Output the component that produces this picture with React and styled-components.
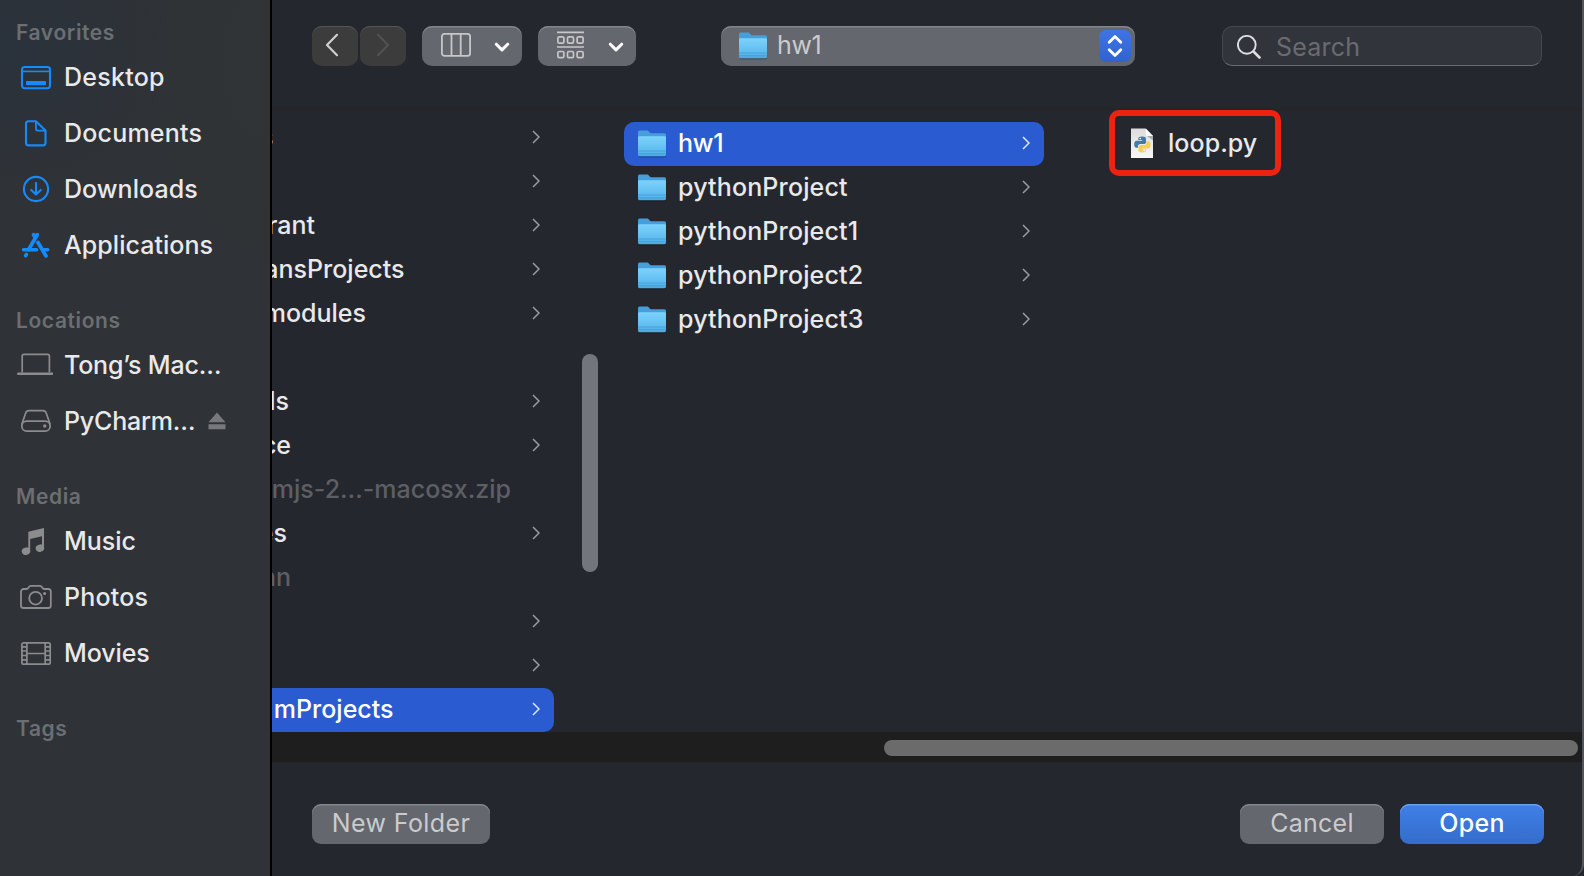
import React from "react";
import styled, { createGlobalStyle } from "styled-components";

const Global = createGlobalStyle`
  * { box-sizing: border-box; }
  html, body { margin: 0; padding: 0; background: #25272f; }
  body {
    font-family: Inter, "Liberation Sans", sans-serif;
    font-size: 25px;
    color: #e9e9ea;
    overflow: hidden;
  }
`;

const Dialog = styled.div`
  display: flex;
  width: 1584px;
  height: 876px;
  overflow: hidden;
  background: #25272f;
`;

/* ---------- sidebar ---------- */
const Sidebar = styled.aside`
  flex: none;
  display: flex;
  flex-direction: column;
  gap: 30px;
  width: 272px;
  padding: 15px 0 0 17px;
  border-right: 2px solid #000;
  background:
    radial-gradient(ellipse 180px 150px at 0 50px, rgba(41, 50, 60, 0.9), rgba(41, 50, 60, 0)),
    radial-gradient(ellipse 160px 260px at 100% 60px, rgba(48, 52, 53, 0.9), rgba(48, 52, 53, 0)),
    #2f3236;
`;

const Section = styled.section`
  display: flex;
  flex-direction: column;
`;

const Heading = styled.h2`
  margin: 0 0 0 -1px;
  height: 34px;
  padding-top: 1px;
  line-height: 34px;
  font-size: 21px;
  font-weight: 600;
  letter-spacing: 0.6px;
  color: #6b6e73;
`;

const Place = styled.div`
  display: flex;
  align-items: center;
  height: 56px;
  color: ${(p) => (p.$blue ? "#1689fb" : "#8b8c8e")};
`;

const PlaceIcon = styled.svg`
  flex: none;
  width: 36px;
  height: 28px;
  fill: none;
  stroke: currentColor;
  stroke-width: 2.1;
`;

const PlaceName = styled.span`
  margin-left: 11px;
  letter-spacing: ${(p) => p.$track || 0}px;
  color: #e9e9ea;
  font-weight: 450;
  white-space: nowrap;
`;

const Eject = styled.svg`
  width: 18px;
  height: 18px;
  margin-left: ${(p) => p.$gap}px;
  fill: #76787c;
`;

/* ---------- main ---------- */
const Main = styled.main`
  flex: 1;
  min-width: 0;
  display: flex;
  flex-direction: column;
  border-right: 2px solid #53555b;
  border-bottom-right-radius: 12px;
`;

const Toolbar = styled.header`
  display: flex;
  align-items: flex-start;
  height: 110px;
  padding: 26px 0 0 40px;
  border-bottom: 2px solid #262424;
`;

const NavButton = styled.button`
  display: flex;
  align-items: center;
  justify-content: center;
  width: 46px;
  height: 40px;
  margin: 0 2px 0 0;
  padding: 0 6px 2px 0;
  border: 0;
  border-radius: 10px;
  background: #3c3c3c;
  box-shadow: inset 0 1px 0 #555;
  color: ${(p) => (p.$dim ? "#515151" : "#cfcfcf")};
  svg { width: 14px; height: 24px; margin-left: ${(p) => (p.$dim ? 6 : 0)}px; }
`;

const ViewButton = styled.button`
  display: flex;
  align-items: center;
  width: ${(p) => p.$w}px;
  height: 40px;
  margin: 0 0 0 ${(p) => p.$gap}px;
  padding: 0 0 2px 19px;
  border: 0;
  border-radius: 10px;
  background: #64676e;
  box-shadow: inset 0 1.5px 0 #83858b;
  svg { flex: none; }
`;

const Caret = styled.svg`
  width: 16px;
  height: 12px;
  margin: 3px 0 0 ${(p) => p.$gap}px;
`;

const PathPopup = styled.div`
  display: flex;
  align-items: center;
  width: 414px;
  height: 40px;
  margin-left: 85px;
  padding: 0 4px 0 18px;
  border-radius: 10px;
  background: #64676e;
  box-shadow: inset 0 1.5px 0 #83858b;
`;

const PathName = styled.span`
  flex: 1;
  margin-left: 9px;
  padding-bottom: 3px;
  color: #cbcbcc;
  letter-spacing: -0.4px;
`;

const Stepper = styled.span`
  display: flex;
  width: 32px;
  height: 32px;
  border-radius: 7px;
  background: linear-gradient(#3f74e6, #3063d0);
`;

const SearchField = styled.div`
  display: flex;
  align-items: center;
  width: 320px;
  height: 40px;
  margin-left: 87px;
  padding: 2px 0 0 14px;
  border: 1px solid #45474f;
  border-bottom-color: #6a6c73;
  border-radius: 10px;
  background: #32343c;
  color: #696b71;
  letter-spacing: 0.2px;
  svg { width: 24px; height: 24px; margin-right: 15px; }
`;

const Browser = styled.div`
  display: flex;
  height: 622px;
`;

const Column = styled.div`
  flex: none;
  width: ${(p) => p.$w}px;
  padding: ${(p) => p.$pad};
  overflow: hidden;
`;

const ScrollGutter = styled.div`
  flex: none;
  width: 70px;
  padding: 244px 0 0 28px;
`;

const ScrollThumb = styled.div`
  width: ${(p) => p.$w}px;
  height: ${(p) => p.$h}px;
  border-radius: 8px;
  background: ${(p) => p.$color};
`;

const Row = styled.div`
  display: flex;
  align-items: center;
  justify-content: space-between;
  height: 44px;
  padding: 0 14px 3px ${(p) => (p.$clipped ? 0 : 14)}px;
  border-radius: ${(p) => (p.$clipped ? "0 10px 10px 0" : "10px")};
  background: ${(p) => (p.$selected ? "#2a5bd0" : "transparent")};
  color: ${(p) => (p.$selected ? "#fff" : p.$dim ? "#5d5f64" : "#e9e9ea")};
`;

const Clip = styled.span`
  display: flex;
  justify-content: flex-end;
  width: ${(p) => p.$w}px;
  overflow: hidden;
  font-weight: 450;
  white-space: nowrap;
`;

const Entry = styled.span`
  display: flex;
  align-items: center;
  > svg { position: relative; top: 1px; }
`;

const EntryName = styled.span`
  margin-left: 11px;
  font-weight: 450;
  letter-spacing: ${(p) => p.$track || 0}px;
`;

const FileName = styled(EntryName)`
  margin-left: 14px;
`;

const Chevron = styled.svg`
  flex: none;
  width: 8px;
  height: 14px;
  fill: none;
  stroke: ${(p) => (p.$light ? "#dfe6f8" : "#9b9ca0")};
  stroke-width: 1.5;
`;

const FileMark = styled.div`
  display: flex;
  align-items: center;
  width: 172px;
  height: 66px;
  padding: 0 0 1px 15px;
  border: 6px solid #ee2211;
  border-radius: 10px;
`;

const ScrollTrack = styled.div`
  display: flex;
  justify-content: flex-end;
  height: 31px;
  padding: 8px 4px 0 0;
  background: #1e1e1e;
  border-bottom: 1px solid #262424;
`;

const Footer = styled.footer`
  display: flex;
  padding: 41px 38px 0 40px;
`;

const Button = styled.button`
  width: ${(p) => p.$w}px;
  height: 40px;
  margin: 0 0 0 ${(p) => p.$gap || 0};
  padding: 0 0 2px;
  border: 0;
  border-radius: 9px;
  background: ${(p) => (p.$primary ? "linear-gradient(#407fe8, #346dcb)" : "#64676e")};
  box-shadow: inset 0 1.5px 0 ${(p) => (p.$primary ? "#6b9cef" : "#83858b")};
  color: ${(p) => (p.$primary ? "#fff" : "#cbcbcc")};
  font: ${(p) => (p.$primary ? 500 : 400)} 25px Inter, sans-serif;
  letter-spacing: ${(p) => p.$track || 0}px;
`;

/* ---------- drawings ---------- */
const icons = {
  desktop: (
    <>
      <rect x="5" y="4" width="28" height="21.2" rx="2.6" />
      <path d="M5 8.4h28" strokeWidth="1.6" />
      <rect x="9" y="18" width="20" height="4.2" rx="1" fill="currentColor" stroke="none" />
    </>
  ),
  documents: (
    <>
      <path d="M11.5 2.2h7.4L28.5 11.6v12.2a2.6 2.6 0 0 1-2.6 2.6H11.6A2.6 2.6 0 0 1 9 23.8V4.8a2.6 2.6 0 0 1 2.5-2.6z" strokeLinejoin="round" />
      <path d="M18.9 2.4v7.4a1.8 1.8 0 0 0 1.8 1.8h7.6" strokeWidth="1.8" />
    </>
  ),
  downloads: (
    <>
      <circle cx="19" cy="14" r="12.1" />
      <path d="M19 8v11.4M14.2 14.9l4.8 4.7 4.8-4.7" strokeLinecap="round" strokeLinejoin="round" />
    </>
  ),
  applications: (
    <g strokeLinecap="round">
      <path d="M20.3 3.7L11.6 18.6M16.6 3.7L18.4 7M21 11.5l8 13.4" strokeWidth="3.8" />
      <path d="M6.5 18.7h13.2M26 18.7h4.800" strokeWidth="3.4" />
      <path d="M9.4 23.500l-.7 1.200" strokeWidth="3.6" />
    </g>
  ),
  laptop: (
    <>
      <path d="M5.2 21.5V5.200a1.800 1.800 0 0 1 1.800-1.800h23.600a1.800 1.800 0 0 1 1.800 1.800v16.300" strokeWidth="1.700" />
      <path d="M1.200 22.700h34.200" strokeWidth="2.400" strokeLinecap="round" />
    </>
  ),
  drive: (
    <>
      <path d="M4.800 17.200L8.700 6a3.600 3.600 0 0 1 3.400-2.300h13.600A3.600 3.600 0 0 1 29.200 6l3.900 11.200" strokeWidth="1.700" />
      <rect x="4.800" y="14.200" width="28.300" height="9.900" rx="4.900" strokeWidth="1.800" />
      <circle cx="27.800" cy="19" r="1.700" fill="currentColor" stroke="none" />
    </>
  ),
  music: (
    <g fill="currentColor" stroke="none">
      <path d="M11.300 4.800L27 1v19.500h-2V9.300L13.200 12v11.500h-1.900z" />
      <ellipse cx="9" cy="24.200" rx="4.300" ry="3.700" transform="rotate(-15 9 24.200)" />
      <ellipse cx="22.900" cy="21.200" rx="4.300" ry="3.700" transform="rotate(-15 22.900 21.200)" />
    </g>
  ),
  photos: (
    <g strokeWidth="1.800">
      <path d="M4 8.600A2.600 2.600 0 0 1 6.600 6h3.200c1.600 0 2-3.200 4-3.200h9.200c2 0 2.400 3.200 4 3.200h4.200a2.600 2.600 0 0 1 2.600 2.600v13.800a2.600 2.600 0 0 1-2.600 2.600H6.600A2.600 2.600 0 0 1 4 22.400z" />
      <circle cx="18.600" cy="15.200" r="6.400" />
      <circle cx="27.600" cy="10.500" r="1.600" fill="currentColor" stroke="none" />
    </g>
  ),
  movies: (
    <g strokeWidth="1.700">
      <rect x="4.900" y="3.800" width="28.300" height="21.400" rx="1.800" />
      <path d="M9.900 4v21M28.200 4v21M9.900 14.500h18.300M5 7.800h4.900M5 12h4.900M5 16.500h4.900M5 20.800h4.900M28.200 7.800h5M28.200 12h5M28.200 16.500h5M28.200 20.800h5" />
    </g>
  ),
};

const FolderIcon = () => (
  <svg width="29" height="28" viewBox="0 0 29 28">
    <defs>
      <linearGradient id="folderFront" x1="0" y1="0" x2="0" y2="1">
        <stop offset="0" stopColor="#7dd2fb" />
        <stop offset="0.7" stopColor="#5fbcef" />
        <stop offset="1" stopColor="#4ba9e2" />
      </linearGradient>
    </defs>
    <rect x="0.800" y="25" width="27" height="2.500" rx="1" fill="#000" opacity="0.250" />
    <path d="M0 2a1.500 1.500 0 0 1 1.500-1.500h7.600c2 0 2.300 2.800 4.400 2.800h13A1.500 1.500 0 0 1 28 4.800V12H0z" fill="#469fda" />
    <path d="M0 7.400a1.200 1.200 0 0 1 1.200-1.200h25.600A1.200 1.200 0 0 1 28 7.400v17.400a1.400 1.400 0 0 1-1.400 1.400H1.400A1.400 1.400 0 0 1 0 24.800z" fill="url(#folderFront)" />
    <path d="M0 21h28M0 23.700h28" stroke="#459fd6" strokeWidth="0.900" />
  </svg>
);

const PythonFileIcon = () => (
  <svg width="24" height="32" viewBox="0 0 24 32">
    <defs>
      <linearGradient id="paper" x1="0" y1="0" x2="0" y2="1">
        <stop offset="0" stopColor="#dcdcdc" />
        <stop offset="1" stopColor="#f8f8f8" />
      </linearGradient>
    </defs>
    <path d="M1 1.500h14.500L23 9v22H1z" fill="url(#paper)" />
    <path d="M16.500 8.500L23 9v4.500z" fill="#a9a9a9" />
    <path d="M15.800 1.500L23 9h-5.600a1.600 1.600 0 0 1-1.600-1.600z" fill="#fbfbfb" />
    <path d="M8.300 11.800c0-1.500 1.200-2.200 3.800-2.200s3.900.7 3.900 2.300v3c0 1.400-.9 2.200-2.300 2.200h-3.400c-1.600 0-2.300.9-2.300 2.300v1.300H6.400c-1.500 0-2.200-1.300-2.200-3.500s.9-3.500 2.400-3.500h5.600V13H8.300z" fill="#4279ab" />
    <path d="M16.100 23.200c0 1.500-1.300 2.200-3.900 2.200s-3.800-.8-3.800-2.200v-3c0-1.300.9-2.100 2.200-2.100h3.500c1.500 0 2.300-.9 2.300-2.200v-1.700h1.800c1.500 0 2.300 1.300 2.300 3.700s-.9 3.700-2.400 3.700h-5.700v.6h3.700z" fill="#f3d250" />
    <circle cx="10.200" cy="11.600" r=".8" fill="#fff" />
    <circle cx="14.200" cy="23.400" r=".8" fill="#fff" />
  </svg>
);

const DownCaret = ({ gap }) => (
  <Caret $gap={gap} viewBox="0 0 16 12">
    <path d="M2.300 3.200L8 8.900l5.700-5.700" fill="none" stroke="#fff" strokeWidth="3" strokeLinecap="round" strokeLinejoin="round" />
  </Caret>
);

const RowChevron = ({ light }) => (
  <Chevron $light={light} viewBox="0 0 8 14">
    <path d="M1 1l6 6-6 6" />
  </Chevron>
);

/* ---------- data ---------- */
const sections = [
  {
    title: "Favorites",
    blue: true,
    items: [
      { icon: "desktop", name: "Desktop", track: 0.25 },
      { icon: "documents", name: "Documents", track: 0.2 },
      { icon: "downloads", name: "Downloads", track: 0.05 },
      { icon: "applications", name: "Applications", track: 0.05 },
    ],
  },
  {
    title: "Locations",
    items: [
      { icon: "laptop", name: "Tong’s Mac…", track: -0.2 },
      { icon: "drive", name: "PyCharm…", track: -0.2, eject: 13 },
    ],
  },
  {
    title: "Media",
    items: [
      { icon: "music", name: "Music" },
      { icon: "photos", name: "Photos", track: 0.2 },
      { icon: "movies", name: "Movies", track: -0.1 },
    ],
  },
  { title: "Tags", items: [] },
];

/* `w` is how much of each name still shows at the left edge of the column */
const homeRows = [
  { name: "s", w: 1.5, open: true },
  { name: "", w: 0, open: true },
  { name: "rant", w: 43, open: true },
  { name: "ansProjects", w: 132.5, open: true },
  { name: "modules", w: 94, open: true },
  { name: "", w: 0 },
  { name: "ls", w: 17, open: true },
  { name: "ce", w: 19, open: true },
  { name: "mjs-2…-macosx.zip", w: 239, dim: true },
  { name: "es", w: 15, open: true },
  { name: "nn", w: 19, dim: true },
  { name: "", w: 0, open: true },
  { name: "", w: 0, open: true },
  { name: "mProjects", w: 121.5, open: true, selected: true },
];

const projects = ["hw1", "pythonProject", "pythonProject1", "pythonProject2", "pythonProject3"];

export default function App() {
  return (
    <>
      <Global />
      <Dialog>
        <Sidebar>
          {sections.map((s) => (
            <Section key={s.title}>
              <Heading>{s.title}</Heading>
              {s.items.map((it) => (
                <Place key={it.name} $blue={s.blue}>
                  <PlaceIcon viewBox="0 0 36 28">{icons[it.icon]}</PlaceIcon>
                  <PlaceName $track={it.track}>{it.name}</PlaceName>
                  {it.eject && (
                    <Eject $gap={it.eject} viewBox="0 0 18 18">
                      <path d="M9 .500L17.500 10.300H.500zM.500 12.300h17v5H.500z" />
                    </Eject>
                  )}
                </Place>
              ))}
            </Section>
          ))}
        </Sidebar>

        <Main>
          <Toolbar>
            <NavButton>
              <svg viewBox="0 0 14 24"><path d="M12 1.800L2 12l10 10.200" fill="none" stroke="currentColor" strokeWidth="2.200" strokeLinecap="round" strokeLinejoin="round" /></svg>
            </NavButton>
            <NavButton $dim>
              <svg viewBox="0 0 14 24"><path d="M2 1.800L12 12 2 22.200" fill="none" stroke="currentColor" strokeWidth="2.200" strokeLinecap="round" strokeLinejoin="round" /></svg>
            </NavButton>
            <ViewButton $w={100} $gap={14}>
              <svg width="30" height="24" viewBox="0 0 30 24" fill="none" stroke="#c6c7c9" strokeWidth="1.800">
                <rect x="0.900" y="0.900" width="28.200" height="22" rx="2.600" />
                <path d="M10.500 1v22M19.700 1v22" />
              </svg>
              <DownCaret gap={23} />
            </ViewButton>
            <ViewButton $w={98} $gap={16}>
              <svg width="27" height="28" viewBox="0 0 27 28" fill="none" stroke="#c6c7c9" strokeWidth="1.700">
                <path d="M0 1.300h27M0 16h27" />
                {[5.900, 20.500].map((y) => [0.900, 10.500, 20.100].map((x) => (
                  <rect key={`${x}-${y}`} x={x} y={y} width="6" height="6.200" rx="1.400" />
                )))}
              </svg>
              <DownCaret gap={24} />
            </ViewButton>
            <PathPopup>
              <FolderIcon />
              <PathName>hw1</PathName>
              <Stepper>
                <svg width="32" height="32" viewBox="0 0 32 32" fill="none" stroke="#fff" strokeWidth="2.800" strokeLinecap="round" strokeLinejoin="round">
                  <path d="M10.200 12.200L16 6.500l5.800 5.700M10.200 19.800l5.800 5.700 5.800-5.700" />
                </svg>
              </Stepper>
            </PathPopup>
            <SearchField>
              <svg viewBox="0 0 24 24" fill="none" stroke="#dedee0" strokeLinecap="round">
                <circle cx="9.800" cy="9.800" r="8.900" strokeWidth="1.900" />
                <path d="M16.500 16.500l6 6" strokeWidth="2.600" />
              </svg>
              <span>Search</span>
            </SearchField>
          </Toolbar>

          <Browser>
            <Column $w={282} $pad="6px 0 0">
              {homeRows.map((r, i) => (
                <Row key={i} $clipped $selected={r.selected} $dim={r.dim}>
                  <Clip $w={r.w}>{r.name}</Clip>
                  {r.open && <RowChevron light={r.selected} />}
                </Row>
              ))}
            </Column>
            <ScrollGutter>
              <ScrollThumb $w={16} $h={218} $color="#73757d" />
            </ScrollGutter>
            <Column $w={420} $pad="12px 0 0">
              {projects.map((name, i) => (
                <Row key={name} $selected={i === 0}>
                  <Entry>
                    <FolderIcon />
                    <EntryName $track={i === 0 ? -0.3 : 0.15}>{name}</EntryName>
                  </Entry>
                  <RowChevron light={i === 0} />
                </Row>
              ))}
            </Column>
            <Column $w={300} $pad="0 0 0 65px">
              <FileMark>
                <PythonFileIcon />
                <FileName $track={0.05}>loop.py</FileName>
              </FileMark>
            </Column>
          </Browser>

          <ScrollTrack>
            <ScrollThumb $w={694} $h={16} $color="#6b6b6b" />
          </ScrollTrack>

          <Footer>
            <Button $w={178} $track={0.4}>New Folder</Button>
            <Button $w={144} $gap="auto" $track={0.25}>Cancel</Button>
            <Button $w={144} $gap="16px" $track={0.25} $primary>Open</Button>
          </Footer>
        </Main>
      </Dialog>
    </>
  );
}
